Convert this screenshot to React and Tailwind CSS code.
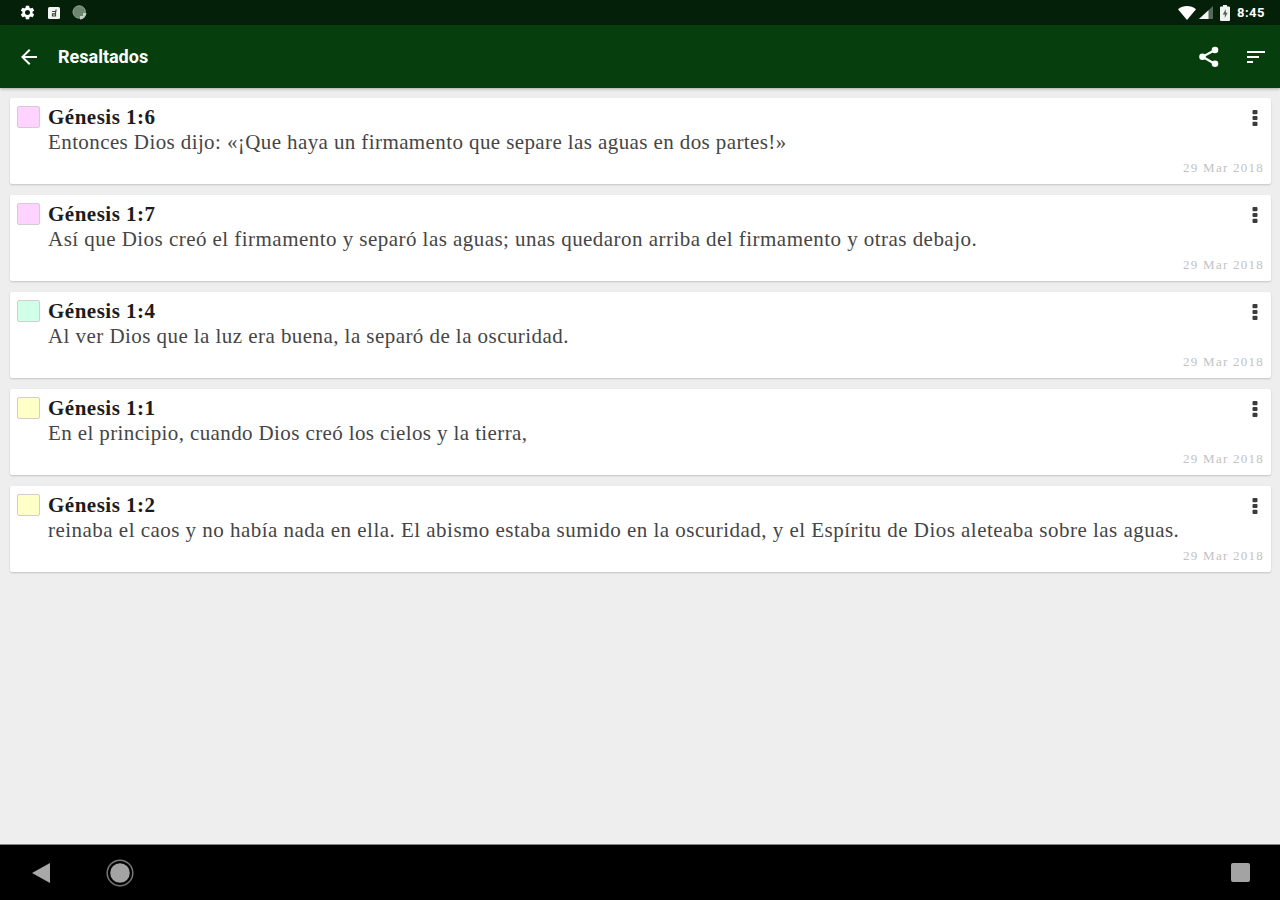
import React from 'react';
import { MdArrowBack, MdSort, MdSettings } from 'react-icons/md';

const highlights = [
  {
    ref: 'Génesis 1:6',
    text: 'Entonces Dios dijo: «¡Que haya un firmamento que separe las aguas en dos partes!»',
    date: '29 Mar 2018',
    swatch: 'bg-[#ffd2ff]',
    tracking: 'tracking-[0.4px]'
  },
  {
    ref: 'Génesis 1:7',
    text: 'Así que Dios creó el firmamento y separó las aguas; unas quedaron arriba del firmamento y otras debajo.',
    date: '29 Mar 2018',
    swatch: 'bg-[#ffd2ff]',
    tracking: 'tracking-[0.46px]'
  },
  {
    ref: 'Génesis 1:4',
    text: 'Al ver Dios que la luz era buena, la separó de la oscuridad.',
    date: '29 Mar 2018',
    swatch: 'bg-[#d2ffe8]',
    tracking: 'tracking-[0.44px]'
  },
  {
    ref: 'Génesis 1:1',
    text: 'En el principio, cuando Dios creó los cielos y la tierra,',
    date: '29 Mar 2018',
    swatch: 'bg-[#ffffc8]',
    tracking: 'tracking-[0.39px]'
  },
  {
    ref: 'Génesis 1:2',
    text: 'reinaba el caos y no había nada en ella. El abismo estaba sumido en la oscuridad, y el Espíritu de Dios aleteaba sobre las aguas.',
    date: '29 Mar 2018',
    swatch: 'bg-[#ffffc8]',
    tracking: 'tracking-[0.475px]'
  }
];

const StatusBar = () => (
  <div className="flex h-[25px] shrink-0 items-center justify-between bg-[#042008] pl-[19px] pr-[15px] text-white">
    <div className="flex items-center">
      <MdSettings className="h-[17px] w-[17px]" />
      <svg className="ml-3 h-3 w-3" viewBox="0 0 12 12">
        <rect width="12" height="12" rx="1.5" fill="#f2f5f2" />
        <path d="M4 4.5h3.500v4.500H4.500V6.800h3M8 2.500v2" fill="none" stroke="#35513a" strokeWidth="1.2" />
      </svg>
      <svg className="ml-[12px] h-[15px] w-[15px]" viewBox="0 0 15 15">
        <circle cx="7.2" cy="7" r="6.2" fill="#6d8670" stroke="#8fa391" strokeWidth="1" />
        <path d="M8 14.5v-3.500h3V8h3.500A7 7 0 0 1 8 14.500z" fill="#c4cfc5" />
      </svg>
    </div>
    <div className="flex items-center">
      <svg className="h-[15px] w-[18px]" viewBox="0 0 18 15">
        <path d="M0 4.200C5.200-.2 12.800-.2 18 4.200L9 15z" fill="#fff" />
      </svg>
      <svg className="ml-[3px] h-[13px] w-[14px]" viewBox="0 0 14 13">
        <path d="M14 0v13H0z" fill="#53695a" />
        <path d="M9.500 4.200V13H0z" fill="#f5f7f5" />
      </svg>
      <svg className="ml-[7px] h-[16px] w-[10px]" viewBox="0 0 10 16">
        <path d="M3 0h4v1.500h2A1 1 0 0 1 10 2.500V15a1 1 0 0 1-1 1H1a1 1 0 0 1-1-1V2.500a1 1 0 0 1 1-1h2z" fill="#f0f3f0" />
        <path d="M5.800 4 2.800 9.500h2V13l2.800-5.200h-1.800z" fill="#4a6650" />
      </svg>
      <span className="ml-[7px] font-['Roboto',sans-serif] text-[13px] leading-none font-bold tracking-[0.5px]">8:45</span>
    </div>
  </div>
);

const ShareIcon = () => (
  <svg className="h-6 w-6" viewBox="0 0 24 24" fill="#fff">
    <path d="M18 5 5.500 11.800 18 19" fill="none" stroke="#fff" strokeWidth="2.200" />
    <circle cx="18" cy="5" r="3.300" />
    <circle cx="5.500" cy="11.800" r="3.300" />
    <circle cx="18" cy="18.800" r="3.300" />
  </svg>
);

const AppBar = () => (
  <header className="z-10 flex h-[63px] shrink-0 items-center bg-[#063f0d] pr-3 pl-[17px] text-white shadow-[0_1px_3px_rgba(0,0,0,0.3)]">
    <MdArrowBack className="h-6 w-6" />
    <h1 className="ml-[17px] flex-1 font-['Roboto',sans-serif] text-[18px] font-bold">Resaltados</h1>
    <ShareIcon />
    <MdSort className="ml-[23px] h-6 w-6" />
  </header>
);

const MoreIcon = () => (
  <svg className="mr-[5px] h-[18px] w-[6px] shrink-0 fill-[#3b3b3b]" viewBox="0 0 6 18">
    <rect x="0.500" y="1" width="5" height="4.200" rx="1" />
    <rect x="0.500" y="6.900" width="5" height="4.200" rx="1" />
    <rect x="0.500" y="12.800" width="5" height="4.200" rx="1" />
  </svg>
);

const HighlightCard = ({ item }) => (
  <article className="flex h-[86px] rounded-xs bg-white pl-[7px] shadow-[0_1px_2px_rgba(0,0,0,0.18)]">
    <div className={`mt-2 h-[22px] w-[23px] shrink-0 rounded-xs border border-[#d3cdd0] ${item.swatch}`}></div>
    <div className="ml-2 flex flex-1 flex-col whitespace-nowrap">
      <h2 className="mt-[7px] text-[21px] leading-[25px] font-bold tracking-[0.5px] text-[#1c1c1c]">{item.ref}</h2>
      <p className={`text-[21px] leading-6 text-[#454545] ${item.tracking}`}>{item.text}</p>
    </div>
    <div className="flex w-0 shrink-0 flex-col items-end justify-between pt-[11px] pr-2 pb-2">
      <MoreIcon />
      <time className="-mr-px text-[13px] leading-4 tracking-[1.25px] whitespace-nowrap text-[#c2c2c2]">{item.date}</time>
    </div>
  </article>
);

const NavigationBar = () => (
  <nav className="flex h-14 shrink-0 items-center border-t border-[#858585] bg-black pr-[30px] pl-[32px]">
    <svg className="h-5 w-[18px]" viewBox="0 0 18 20">
      <path d="M18 0v20L0 10z" fill="#a8a8a8" />
    </svg>
    <svg className="ml-[56px] h-7 w-7" viewBox="0 0 28 28">
      <circle cx="14" cy="14" r="12.800" fill="none" stroke="#777" strokeWidth="1.500" />
      <circle cx="14" cy="14" r="9.800" fill="#a3a3a3" />
    </svg>
    <div className="ml-auto h-[19px] w-[19px] rounded-xs bg-[#a3a3a3]"></div>
  </nav>
);

export default function App() {
  return (
    <div className="flex h-screen flex-col overflow-hidden bg-[#eeeeee]">
      <StatusBar />
      <AppBar />
      <main className="flex flex-1 flex-col gap-[11px] pt-[10px] pr-[9px] pl-[10px] font-['Liberation_Serif',serif]">
        {highlights.map((item) => (
          <HighlightCard key={item.ref} item={item} />
        ))}
      </main>
      <NavigationBar />
    </div>
  );
}
